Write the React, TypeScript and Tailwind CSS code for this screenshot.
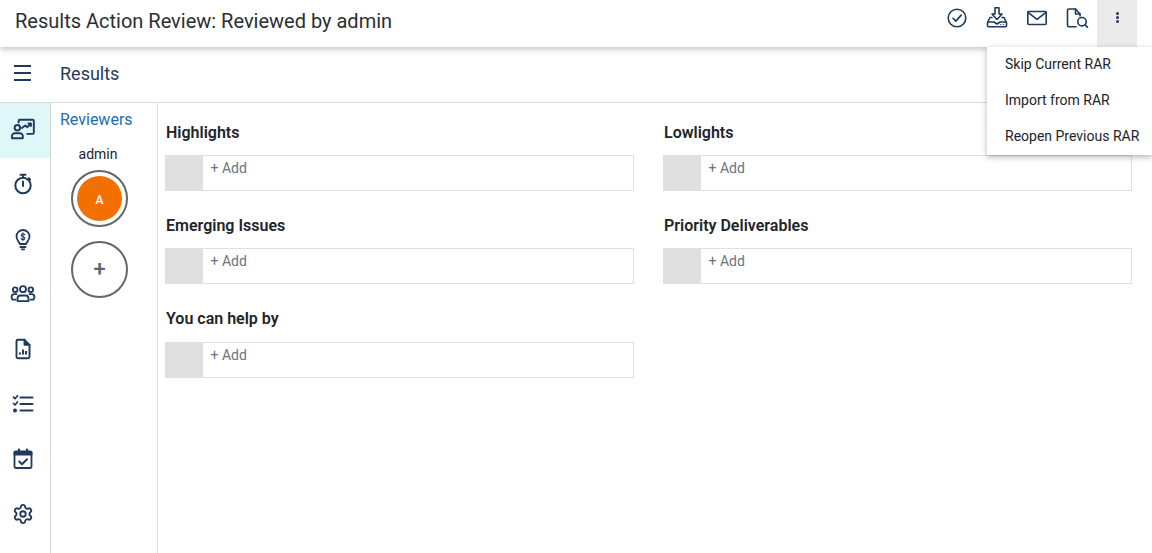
import React from "react";
import { Settings } from "lucide-react";

const ink = "#1f3a5c";

const Sv = ({ children, size = 24, vb = "0 0 24 24", w = 1.8 }: { children: React.ReactNode; size?: number; vb?: string; w?: number }) => (
  <svg width={size} height={size} viewBox={vb} fill="none" stroke={ink} strokeWidth={w} strokeLinecap="round" strokeLinejoin="round">
    {children}
  </svg>
);

const CheckCircle = () => (
  <Sv w={1.6}><circle cx="12" cy="12" r="8.8" /><path d="M8 12.3l2.8 2.8 5.4-6" /></Sv>
);
const Download = () => (
  <Sv w={1.6}>
    <path d="M10 1.800h4v6.200h3L12 13.500 7 8h3z" />
    <path d="M7 11.500H5L2.500 16.500v3.200a1 1 0 0 0 1 1h17a1 1 0 0 0 1-1v-3.200L19 11.500h-2" />
    <path d="M2.800 16h6.200l3 2 3-2h6.200" />
    <path d="M15.800 18.600h.01M18.400 18.600h.01" strokeWidth={1.400} />
  </Sv>
);
const Mail = () => (
  <Sv w={1.6}><rect x="2.800" y="5.500" width="18.400" height="13" rx="1" /><path d="M3 6.300l9 7 9-7" /></Sv>
);
const FileSearch = () => (
  <Sv w={1.6}>
    <path d="M11 20.700H4a1.500 1.500 0 0 1-1.500-1.500V4.500A1.500 1.500 0 0 1 4 3h6.500L15 8v2" />
    <path d="M10.500 3v5H15" />
    <circle cx="17" cy="15.700" r="4.200" />
    <path d="M20 18.800l2.500 2.400" />
  </Sv>
);
const Presenter = () => (
  <Sv size={26} w={1.8}>
    <path d="M8 6V4.500A1 1 0 0 1 9 3.500h12a1 1 0 0 1 1 1v11a1 1 0 0 1-1 1H16" />
    <circle cx="6.800" cy="10.800" r="2.500" />
    <path d="M1.800 20.500v-2a2.500 2.500 0 0 1 2.500-2.500h5a2.500 2.500 0 0 1 2.500 2.500v2z" />
    <path d="M11 11l3-2.300 2 1.600 3.200-3.300M17 7h2.300v2.300" />
  </Sv>
);
const Timer = () => (
  <Sv w={2}>
    <path d="M9.500 2.800h5M12 2.800v3" />
    <path d="M17.800 6.300l1.300 1.300" />
    <circle cx="12" cy="13.500" r="7.700" />
    <path d="M12 9.500v4.500" />
  </Sv>
);
const Bulb = () => (
  <Sv w={1.8}>
    <path d="M8.800 17c0-1.700-3.300-3.300-3.300-7.500a6.500 6.500 0 0 1 13 0c0 4.200-3.300 5.800-3.300 7.500z" />
    <path d="M9.500 20h5" strokeWidth={2.200} />
    <path d="M10.800 22.300h2.400" strokeWidth={1.800} />
    <path d="M13.800 7.800c-.4-.7-1-1-1.800-1-1 0-1.800.5-1.800 1.400 0 2 3.700 1 3.700 3 0 .9-.8 1.400-1.900 1.400-.8 0-1.500-.4-1.900-1M12 5.800v8" strokeWidth={1.100} />
  </Sv>
);
const People = () => (
  <svg width="26" height="26" viewBox="0 0 26 26" fill="none" stroke={ink} strokeWidth={1.8} strokeLinecap="round" strokeLinejoin="round">
    <circle cx="13" cy="8.200" r="3" />
    <circle cx="5.200" cy="8.700" r="2.300" />
    <circle cx="20.800" cy="8.700" r="2.300" />
    <path d="M7.500 20.200v-2.700a3 3 0 0 1 3-3h5a3 3 0 0 1 3 3v2.700z" />
    <path d="M6.500 13.200H4.500a3 3 0 0 0-3 3l1 2.500h3M19.500 13.200h2a3 3 0 0 1 3 3l-1 2.500h-3" />
  </svg>
);
const FileChart = () => (
  <Sv w={1.9}>
    <path d="M13.500 2.800H7a1.500 1.500 0 0 0-1.500 1.500v15.400A1.500 1.500 0 0 0 7 21.200h10a1.500 1.500 0 0 0 1.500-1.500V7.800z" />
    <path d="M13.500 2.800v5h5" fill={ink} />
    <path d="M9 17.500v-2M12 17.500v-5M15 17.500v-3.500" strokeWidth={2} strokeLinecap="butt" />
  </Sv>
);
const Checklist = () => (
  <Sv w={2}>
    <path d="M9.500 5.500h12M9.500 12h12M9.500 18.500h12" />
    <path d="M2.500 5.200l1.500 1.500 2.500-3M2.500 11.500l1.500 1.500 2.500-3" strokeWidth={1.700} />
    <circle cx="4" cy="18.500" r="1" fill={ink} />
  </Sv>
);
const Calendar = () => (
  <svg width="24" height="24" viewBox="0 0 24 24" fill="none" stroke={ink} strokeWidth={1.800} strokeLinecap="round" strokeLinejoin="round">
    <rect x="3.500" y="4.500" width="17" height="16.500" rx="1.200" />
    <path d="M3.500 5h17v2.500h-17z" fill={ink} />
    <path d="M8 2.500v3M16 2.500v3" strokeWidth={2.200} />
    <path d="M8.200 14.500l2.800 2.700 5-5" strokeWidth={2} />
  </svg>
);

const Section = ({ title, tall }: { title: string; tall?: boolean }) => (
  <div className="flex flex-col">
    <div className={`${tall ? "h-[53px]" : "h-[52px]"} pt-[20px] pl-px text-[16px] font-semibold leading-[20px] text-[#212529]`}>{title}</div>
    <div className="flex h-[36px] border border-[#e0e0e0]">
      <div className="w-[37px] shrink-0 bg-[#e0e0e0]" />
      <div className="pl-[7.500px] pt-[2px] text-[14px] leading-[20px] text-[#6c757d]">+ Add</div>
    </div>
  </div>
);

const NavItem = ({ children, active }: { children: React.ReactNode; active?: boolean }) => (
  <div className={`flex h-[55px] items-center justify-center pb-[4px] pr-[4px] ${active ? "bg-[#e0f7fa]" : ""}`}>{children}</div>
);

const MenuRow = ({ children }: { children: React.ReactNode }) => (
  <div className="flex h-[36px] items-center pb-[2px] pl-[18px] text-[14px] text-[#212529]">{children}</div>
);

export default function App() {
  return (
    <div className="relative flex h-[553px] w-[1152px] flex-col overflow-hidden bg-white text-[#212529]" style={{ fontFamily: "Roboto, sans-serif" }}>
      <header className="relative z-10 flex h-[47px] shrink-0 items-start justify-between bg-white shadow-[0_2px_6px_rgba(0,0,0,0.25)]">
        <div className="pl-[15px] pt-[7px] text-[20px] leading-[28px] text-[#2b2f33]">Results Action Review: Reviewed by admin</div>
        <div className="flex items-start pr-[15px]">
          <div className="mt-[6px] flex w-[40px] justify-center"><CheckCircle /></div>
          <div className="mt-[6px] flex w-[40px] justify-center"><Download /></div>
          <div className="mt-[6px] flex w-[40px] justify-center"><Mail /></div>
          <div className="mt-[6px] flex w-[40px] justify-center"><FileSearch /></div>
          <div className="flex h-[47px] w-[40px] justify-center bg-[#ebebeb] pt-[12px]">
            <div className="flex flex-col gap-[1px]">
              <span className="h-[3px] w-[3px] rounded-full bg-[#1f3a5c]" />
              <span className="h-[3px] w-[3px] rounded-full bg-[#1f3a5c]" />
              <span className="h-[3px] w-[3px] rounded-full bg-[#1f3a5c]" />
            </div>
          </div>
        </div>
      </header>

      <div className="flex h-[56px] shrink-0 items-center border-b border-[#dcdcdc]">
        <div className="flex w-[45px] justify-center pb-[4px]">
          <div className="flex flex-col gap-[5px]">
            <span className="h-[2px] w-[17px] bg-[#1f3a5c]" />
            <span className="h-[2px] w-[17px] bg-[#1f3a5c]" />
            <span className="h-[2px] w-[17px] bg-[#1f3a5c]" />
          </div>
        </div>
        <div className="ml-[15px] pb-[2px] text-[18px] leading-[24px] text-[#1f3a5c]">Results</div>
      </div>

      <div className="flex min-h-0 flex-1">
        <nav className="w-[51px] shrink-0 border-r border-[#d8d8d8]">
          <NavItem active><Presenter /></NavItem>
          <NavItem><Timer /></NavItem>
          <NavItem><Bulb /></NavItem>
          <NavItem><People /></NavItem>
          <NavItem><FileChart /></NavItem>
          <NavItem><Checklist /></NavItem>
          <NavItem><Calendar /></NavItem>
          <NavItem><Settings size={22} strokeWidth={2} color={ink} /></NavItem>
        </nav>
        <aside className="flex w-[107px] shrink-0 flex-col border-r border-[#e0e0e0]">
          <div className="pl-[9px] pt-[7px] text-[16px] leading-[20px] text-[#1a6fb5]">Reviewers</div>
          <div className="mt-[14px] flex flex-col items-center pr-[9px]">
            <div className="mr-[3px] text-[14px] leading-[20px] text-[#212529]">admin</div>
            <div className="mt-[6px] flex h-[57px] w-[57px] items-center justify-center rounded-full border-2 border-[#666666]">
              <div className="flex h-[45px] w-[45px] items-center justify-center rounded-full bg-[#f26f00] pt-[2px] text-[12px] font-medium text-white">A</div>
            </div>
            <div className="mt-[14px] flex h-[57px] w-[57px] items-center justify-center rounded-full border-2 border-[#666666] pb-[2px] text-[22px] font-medium leading-none text-[#5a6470]">+</div>
          </div>
        </aside>
        <main className="grid flex-1 grid-cols-[469px_469px] content-start gap-x-[29px] gap-y-[5px] pl-[7px]">
          <Section title="Highlights" />
          <Section title="Lowlights" />
          <Section title="Emerging Issues" />
          <Section title="Priority Deliverables" />
          <Section title="You can help by" tall />
        </main>
      </div>

      <div className="absolute left-[987px] top-[47px] z-20 flex h-[108px] w-[165px] flex-col bg-white shadow-[0_2px_6px_rgba(0,0,0,0.3)]">
        <MenuRow>Skip Current RAR</MenuRow>
        <MenuRow>Import from RAR</MenuRow>
        <MenuRow>Reopen Previous RAR</MenuRow>
      </div>
    </div>
  );
}
